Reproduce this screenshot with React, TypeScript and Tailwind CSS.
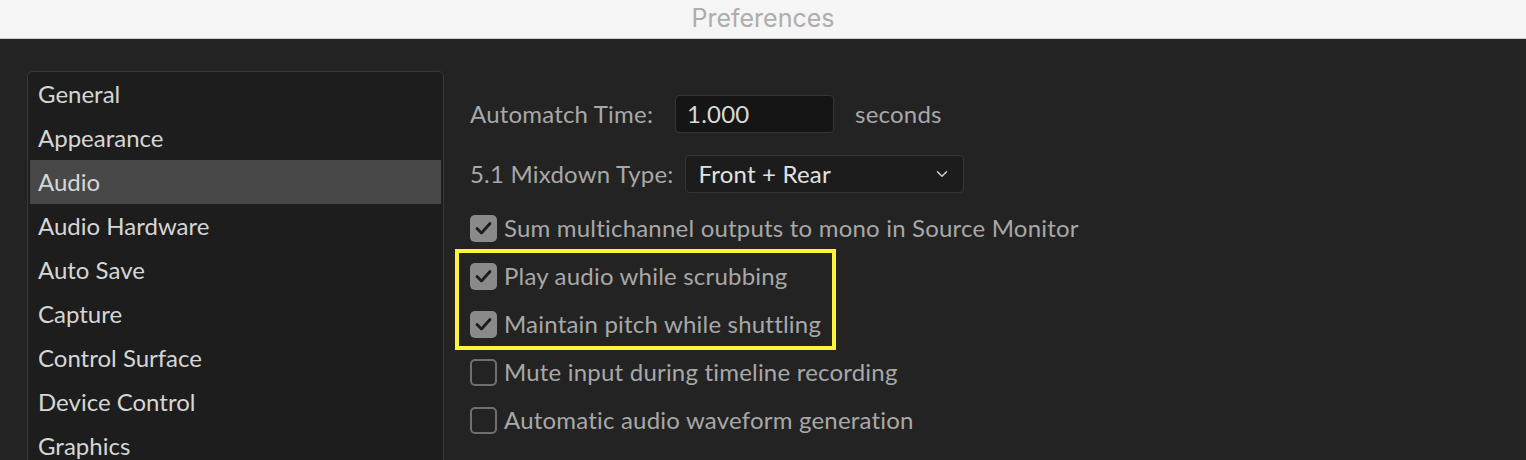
import { ChevronDown } from "lucide-react";

const sections = [
  "General",
  "Appearance",
  "Audio",
  "Audio Hardware",
  "Auto Save",
  "Capture",
  "Control Surface",
  "Device Control",
  "Graphics",
];

const CheckRow = ({ label, checked }: { label: string; checked: boolean }) => (
  <div className="flex h-[48px] items-center">
    {checked ? (
      <div className="flex h-[27px] w-[27px] items-center justify-center rounded-[5px] bg-[#8a8a8a]">
        <svg width="17" height="14" viewBox="0 0 17 14" fill="none">
          <path d="M2 7.5 L6.5 12 L15 2.5" stroke="#1d1d1d" strokeWidth="2.8" strokeLinecap="round" strokeLinejoin="round" />
        </svg>
      </div>
    ) : (
      <div className="h-[27px] w-[27px] rounded-[5px] border-2 border-[#6f6f6f]" />
    )}
    <span className="ml-[7px] text-[#a8a8a8]">{label}</span>
  </div>
);

export default function App() {
  return (
    <div className="h-[460px] w-[1526px] overflow-hidden bg-[#232323] font-['Lato',sans-serif] text-[24px]">
      <div className="flex h-[39px] items-center justify-center border-b border-[#cfcfcf] bg-[#f5f5f5]">
        <span className="font-['Inter',sans-serif] text-[25px] text-[#adadad]">Preferences</span>
      </div>

      <div className="flex pl-[27px] pt-[32px]">
        <div className="h-[420px] w-[417px] shrink-0 rounded-[5px] border border-[#383838] bg-[#1d1d1d] px-[2px]">
          {sections.map((s) => (
            <div
              key={s}
              className={
                "flex h-[44px] items-center pl-[8px] text-[#d6d6d6] " +
                (s === "Audio" ? "bg-[#484848]" : "")
              }
            >
              {s}
            </div>
          ))}
        </div>

        <div className="ml-[26px] flex flex-col pt-[24px] tracking-[0.2px] text-[#a8a8a8]">
          <div className="flex h-[38px] items-center">
            <span>Automatch Time:</span>
            <div className="ml-[22px] flex h-[38px] w-[159px] items-center rounded-[4px] border border-[#363636] bg-[#151515] pl-[11px] text-[#dadada]">
              1.000
            </div>
            <span className="ml-[21px]">seconds</span>
          </div>

          <div className="mt-[22px] flex h-[38px] items-center">
            <span>5.1 Mixdown Type:</span>
            <div className="ml-[11px] flex h-[38px] w-[279px] items-center justify-between rounded-[4px] border border-[#363636] bg-[#1c1c1c] pl-[13px] pr-[12px] text-[#e2e2e2]">
              <span>Front + Rear</span>
              <ChevronDown size={18} strokeWidth={2} className="text-[#cfcfcf]" />
            </div>
          </div>

          <div className="mt-[11px]">
            <CheckRow label="Sum multichannel outputs to mono in Source Monitor" checked />
            <div className="relative">
              <div className="pointer-events-none absolute -left-[15px] -top-[3px] h-[101px] w-[381px] border-4 border-[#fcf43a]" />
              <CheckRow label="Play audio while scrubbing" checked />
              <CheckRow label="Maintain pitch while shuttling" checked />
            </div>
            <CheckRow label="Mute input during timeline recording" checked={false} />
            <CheckRow label="Automatic audio waveform generation" checked={false} />
          </div>
        </div>
      </div>
    </div>
  );
}
